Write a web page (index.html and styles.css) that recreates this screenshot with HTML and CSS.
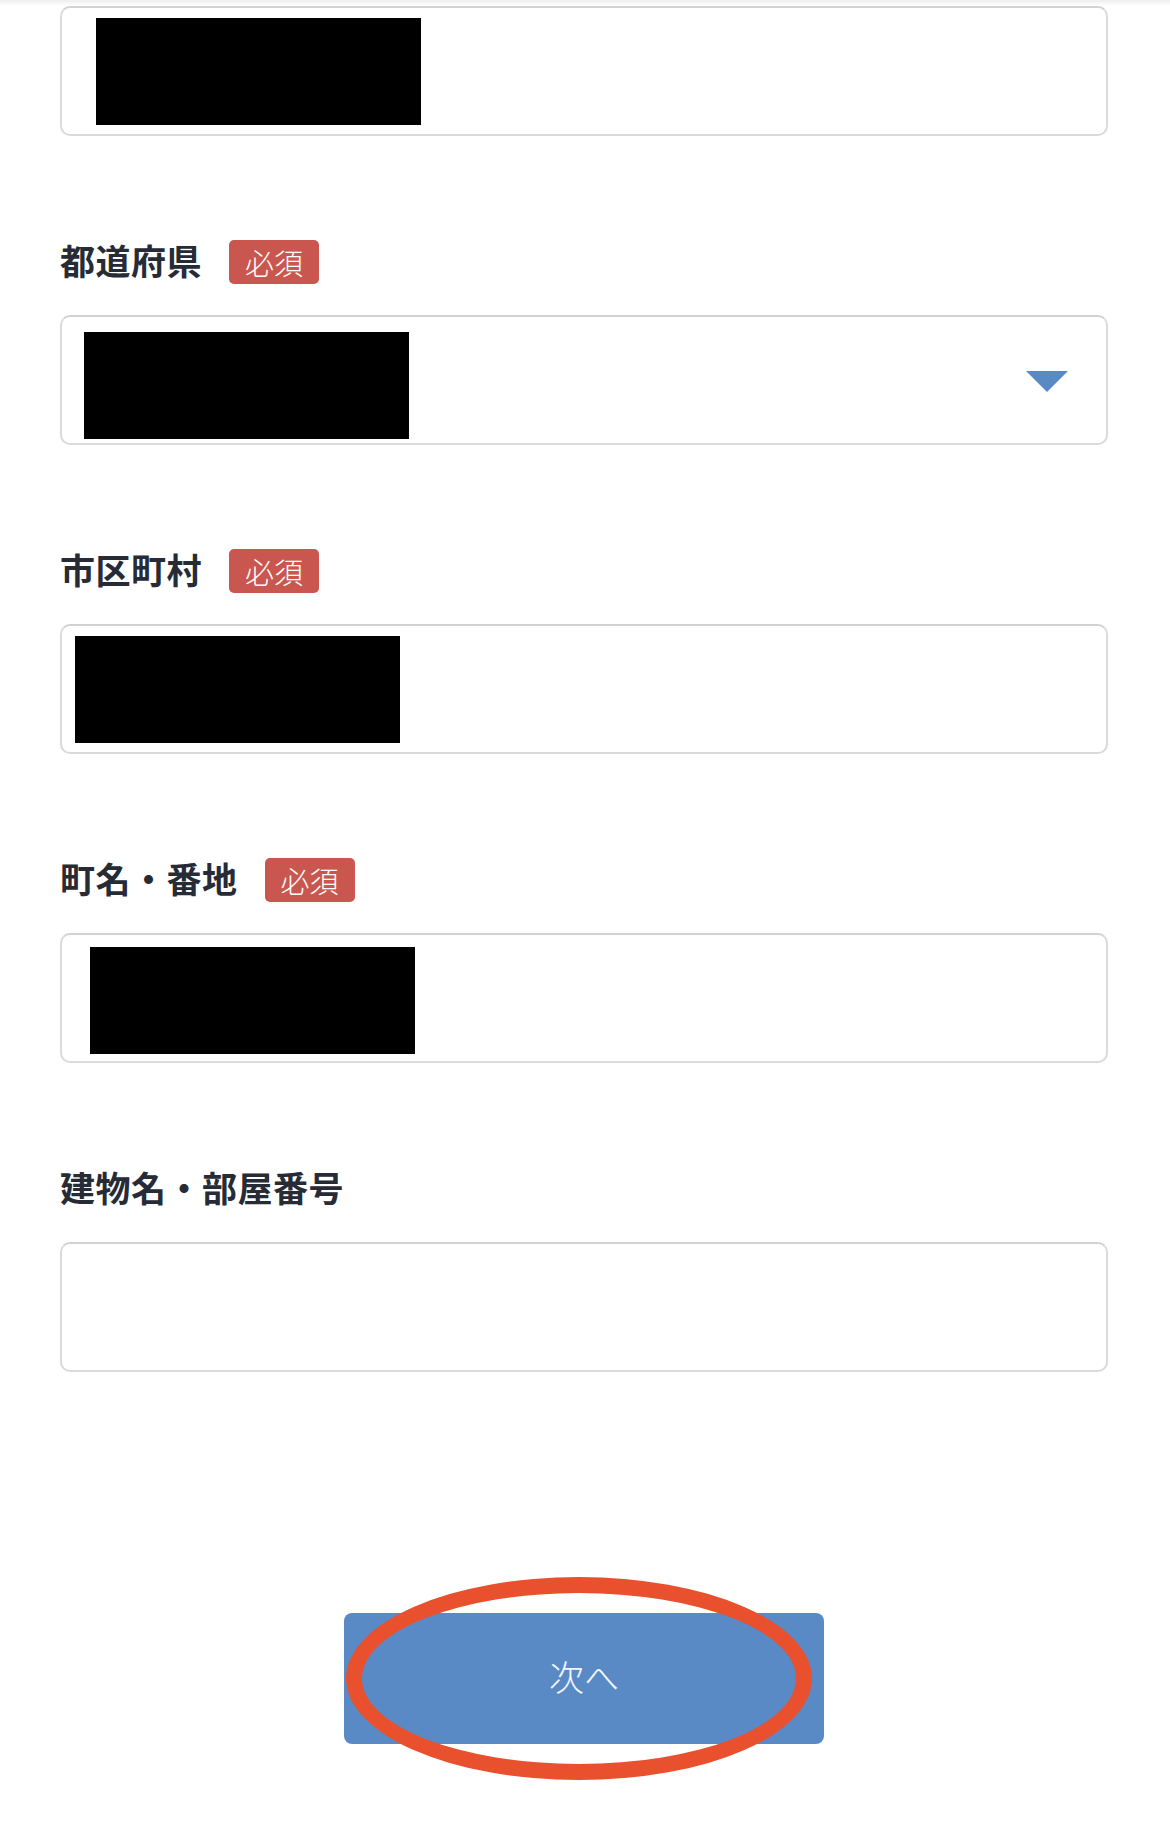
FILE: index.html
```html
<!DOCTYPE html>
<html lang="ja">
<head>
    <meta charset="UTF-8">
    <meta name="viewport" content="width=device-width, initial-scale=1.0">
    <title>住所入力</title>
    <link rel="stylesheet" href="styles.css">
</head>
<body>
    <div class="top-shade"></div>
    <main class="form">
        <div class="field">
            <div class="box box-a"><span class="redact"></span></div>
        </div>
        <div class="field">
            <div class="label-row">
                <span class="label">都道府県</span>
                <span class="badge">必須</span>
            </div>
            <div class="box box-b"><span class="redact"></span><span class="caret"></span></div>
        </div>
        <div class="field">
            <div class="label-row">
                <span class="label">市区町村</span>
                <span class="badge">必須</span>
            </div>
            <div class="box box-c"><span class="redact"></span></div>
        </div>
        <div class="field">
            <div class="label-row">
                <span class="label">町名・番地</span>
                <span class="badge">必須</span>
            </div>
            <div class="box box-d"><span class="redact"></span></div>
        </div>
        <div class="field field-last">
            <div class="label-row">
                <span class="label">建物名・部屋番号</span>
            </div>
            <div class="box"></div>
        </div>
        <div class="actions">
            <button class="next" type="button">次へ</button>
            <span class="mark"></span>
        </div>
    </main>
</body>
</html>
```

FILE: styles.css
```css
body {
    margin: 0;
    padding: 0;
    background-color: #fff;
    font-family: "Noto Sans CJK JP", "Noto Sans", sans-serif;
}
.top-shade {
    height: 6px;
    background: linear-gradient(#eeeeee, #fff);
}
.form {
    padding: 0 62px 85px 60px;
}
.field {
    margin-bottom: 104px;
}
.field-last {
    margin-bottom: 241px;
}
.label-row {
    display: flex;
    align-items: center;
    gap: 27px;
    height: 44px;
    margin-bottom: 31px;
}
.label {
    font-size: 35px;
    font-weight: 700;
    color: #262b36;
    line-height: 1;
    padding-bottom: 6px;
    letter-spacing: 0.5px;
}
.badge {
    display: flex;
    align-items: center;
    justify-content: center;
    width: 90px;
    height: 44px;
    border-radius: 5px;
    background-color: #c9574f;
    color: #fff;
    font-size: 29px;
    font-weight: 300;
    line-height: 1;
}
.box {
    display: flex;
    align-items: center;
    height: 130px;
    box-sizing: border-box;
    border: 2px solid #dadada;
    border-top-color: #d2d2d2;
    border-radius: 10px;
    background-color: #fff;
}
.redact {
    width: 325px;
    height: 107px;
    background-color: #000;
}
.box-a .redact {
    margin-left: 34px;
}
.box-b .redact {
    margin-left: 22px;
    margin-top: 11px;
}
.box-c .redact {
    margin-left: 13px;
}
.box-d .redact {
    margin-left: 28px;
    margin-top: 5px;
}
.caret {
    margin-left: auto;
    margin-right: 38px;
    margin-top: 2px;
    width: 0;
    height: 0;
    border-left: 21px solid transparent;
    border-right: 21px solid transparent;
    border-top: 21px solid #5a8ac6;
}
.actions {
    position: relative;
    width: 480px;
    margin: 0 auto;
}
.next {
    display: block;
    width: 480px;
    height: 131px;
    padding: 0 0 6px;
    border: none;
    border-radius: 8px;
    background-color: #5a8ac6;
    color: #f4f7fc;
    font-family: inherit;
    font-size: 35px;
    font-weight: 300;
    cursor: pointer;
}
.mark {
    position: absolute;
    left: 2px;
    top: -36px;
    width: 466px;
    height: 203px;
    box-sizing: border-box;
    border: 16px solid #e8502e;
    border-radius: 50%;
    pointer-events: none;
}
```
